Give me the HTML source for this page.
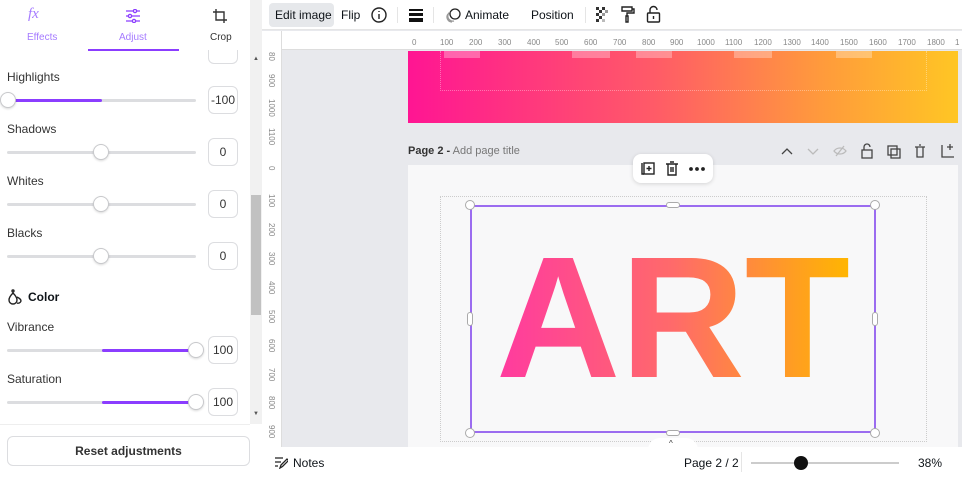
<!DOCTYPE html>
<html><head><meta charset="utf-8"><style>
*{box-sizing:border-box;margin:0;padding:0}
body{width:962px;height:477px;overflow:hidden;font-family:"Liberation Sans",sans-serif;background:#e8e9ed;position:relative;color:#0e1318}
.a{position:absolute}
.lbl{font-size:12px;color:#333;position:absolute;left:7px}
.track{position:absolute;left:7px;width:189px;height:3px;background:#dcdde0;border-radius:2px}
.fill{position:absolute;height:3px;background:#8b3dff;border-radius:2px}
.knob{position:absolute;width:16px;height:16px;border-radius:50%;background:#fff;border:1px solid #c8c9cc;box-shadow:0 1px 2px rgba(0,0,0,.15)}
.box{position:absolute;left:208px;width:30px;height:28px;border:1px solid #dcdde0;border-radius:6px;font-size:12px;text-align:center;line-height:26px;color:#333;background:#fff}
.tb{position:absolute;top:0;font-size:12px;line-height:30px;color:#0e1318}
.hr{position:absolute;top:38px;font-size:8px;color:#888}
.vr{position:absolute;left:264px;font-size:8px;color:#888;transform:rotate(90deg);transform-origin:left top;width:24px}
</style></head><body>
<div class="a" style="left:0;top:0;width:250px;height:477px;background:#fff"></div>
<div class="a" style="left:28px;top:6px;font-size:15px;font-style:italic;color:#a57bff;font-family:'Liberation Serif',serif">fx</div>
<div class="a" style="left:27px;top:32px;font-size:10px;color:#a57bff">Effects</div>
<svg class="a" style="left:125px;top:9px" width="16" height="14" viewBox="0 0 16 14" fill="none" stroke="#8b3dff" stroke-width="1.3"><path d="M1 2h14M1 7h14M1 12h14"/><circle cx="10" cy="2" r="1.6" fill="#fff"/><circle cx="5" cy="7" r="1.6" fill="#fff"/><circle cx="9" cy="12" r="1.6" fill="#fff"/></svg>
<div class="a" style="left:119px;top:32px;font-size:10px;color:#a57bff">Adjust</div>
<svg class="a" style="left:212px;top:8px" width="16" height="16" viewBox="0 0 16 16" fill="none" stroke="#333" stroke-width="1.4"><path d="M4 1v11h11M1 4h11v11"/></svg>
<div class="a" style="left:210px;top:32px;font-size:10px;color:#333">Crop</div>
<div class="a" style="left:88px;top:49px;width:91px;height:2px;background:#8b3dff"></div>
<div class="box" style="top:50px;height:14px;border-top:none;border-radius:0 0 6px 6px"></div>

<div class="lbl" style="top:70px">Highlights</div>
<div class="track" style="top:99px"></div><div class="fill" style="left:7px;top:99px;width:95px"></div>
<div class="knob" style="left:0;top:92px"></div><div class="box" style="top:86px">-100</div>

<div class="lbl" style="top:122px">Shadows</div>
<div class="track" style="top:151px"></div><div class="knob" style="left:93px;top:144px"></div><div class="box" style="top:138px">0</div>
<div class="lbl" style="top:174px">Whites</div>
<div class="track" style="top:203px"></div><div class="knob" style="left:93px;top:196px"></div><div class="box" style="top:190px">0</div>
<div class="lbl" style="top:226px">Blacks</div>
<div class="track" style="top:255px"></div><div class="knob" style="left:93px;top:248px"></div><div class="box" style="top:242px">0</div>

<svg class="a" style="left:8px;top:289px" width="14" height="16" viewBox="0 0 14 16" fill="none" stroke="#222" stroke-width="1.4"><path d="M5 4c-3 3-4 5-4 7a4 4 0 0 0 8 0c0-2-1-4-4-7zM9 8c2 1 4 2 4 4a3 3 0 0 1-4 2"/><circle cx="5" cy="2" r="1"/></svg>
<div class="a" style="left:28px;top:290px;font-size:12px;font-weight:bold">Color</div>

<div class="lbl" style="top:320px">Vibrance</div>
<div class="track" style="top:349px"></div><div class="fill" style="left:102px;top:349px;width:88px"></div>
<div class="knob" style="left:188px;top:342px"></div><div class="box" style="top:336px">100</div>
<div class="lbl" style="top:372px">Saturation</div>
<div class="track" style="top:401px"></div><div class="fill" style="left:102px;top:401px;width:88px"></div>
<div class="knob" style="left:188px;top:394px"></div><div class="box" style="top:388px">100</div>

<div class="a" style="left:0;top:424px;width:250px;height:1px;background:#eee"></div>
<div class="a" style="left:7px;top:436px;width:243px;height:30px;border:1px solid #dcdde0;border-radius:6px;font-size:12px;font-weight:bold;text-align:center;line-height:28px;color:#333">Reset adjustments</div>

<div class="a" style="left:250px;top:0;width:12px;height:424px;background:#f1f1f1"></div>
<div class="a" style="left:251px;top:195px;width:10px;height:120px;background:#c1c1c1"></div>
<div class="a" style="left:253px;top:56px;font-size:6px;color:#555">▲</div>
<div class="a" style="left:253px;top:411px;font-size:6px;color:#555">▼</div>
<div class="a" style="left:250px;top:424px;width:12px;height:53px;background:#fff"></div>

<div class="a" style="left:262px;top:0;width:700px;height:30px;background:#fff;border-bottom:1px solid #e5e5e5"></div>
<div class="a" style="left:269px;top:3px;width:65px;height:24px;background:#e6e8eb;border-radius:4px"></div>
<div class="tb" style="left:275px">Edit image</div>
<div class="tb" style="left:341px">Flip</div>
<svg class="a" style="left:371px;top:7px" width="16" height="16" viewBox="0 0 16 16" fill="none" stroke="#222" stroke-width="1.4"><circle cx="8" cy="8" r="7"/><path d="M8 7v5M8 4v1"/></svg>
<div class="a" style="left:397px;top:7px;width:1px;height:16px;background:#e5e5e5"></div>
<div class="a" style="left:409px;top:9px;width:14px;height:2px;background:#111"></div>
<div class="a" style="left:409px;top:13px;width:14px;height:3px;background:#111"></div>
<div class="a" style="left:409px;top:18px;width:14px;height:4px;background:#111"></div>
<div class="a" style="left:433px;top:7px;width:1px;height:16px;background:#e5e5e5"></div>
<svg class="a" style="left:445px;top:7px" width="16" height="16" viewBox="0 0 16 16" fill="none" stroke="#222" stroke-width="1.3"><circle cx="10" cy="7" r="5"/><path d="M5 5a5 5 0 0 0 4 9M3 7a5 5 0 0 0 4 8" stroke="#999"/></svg>
<div class="tb" style="left:465px">Animate</div>
<div class="tb" style="left:531px">Position</div>
<div class="a" style="left:585px;top:7px;width:1px;height:16px;background:#e5e5e5"></div>
<svg class="a" style="left:596px;top:7px" width="15" height="15"><g fill="#333"><rect x="0" y="0" width="3" height="3"/><rect x="6" y="0" width="3" height="3"/><rect x="3" y="3" width="3" height="3"/><rect x="9" y="3" width="3" height="3" fill="#999"/><rect x="0" y="6" width="3" height="3"/><rect x="6" y="6" width="3" height="3" fill="#999"/><rect x="3" y="9" width="3" height="3"/><rect x="0" y="12" width="3" height="3"/><rect x="6" y="12" width="3" height="3" fill="#bbb"/></g></svg>
<svg class="a" style="left:621px;top:6px" width="14" height="17" viewBox="0 0 14 17" fill="none" stroke="#222" stroke-width="1.4"><path d="M1 1h10v4H1zM11 3h2v4H6v3M5 10h2v6H5z"/></svg>
<svg class="a" style="left:646px;top:5px" width="15" height="18" viewBox="0 0 15 18" fill="none" stroke="#222" stroke-width="1.4"><path d="M4 8V5a3.5 3.5 0 0 1 7 0"/><rect x="1.5" y="8" width="12" height="9" rx="1"/><path d="M7.5 11v3"/></svg>

<div class="a" style="left:262px;top:31px;width:700px;height:19px;background:#fff;border-bottom:1px solid #ddd"></div>
<div class="a" style="left:262px;top:31px;width:20px;height:416px;background:#fff;border-right:1px solid #ddd"></div>
<div class="hr" style="left:412px">0</div><div class="hr" style="left:440px">100</div><div class="hr" style="left:469px">200</div><div class="hr" style="left:498px">300</div><div class="hr" style="left:527px">400</div><div class="hr" style="left:555px">500</div><div class="hr" style="left:584px">600</div><div class="hr" style="left:613px">700</div><div class="hr" style="left:642px">800</div><div class="hr" style="left:670px">900</div><div class="hr" style="left:697px">1000</div><div class="hr" style="left:725px">1100</div><div class="hr" style="left:754px">1200</div><div class="hr" style="left:783px">1300</div><div class="hr" style="left:811px">1400</div><div class="hr" style="left:840px">1500</div><div class="hr" style="left:869px">1600</div><div class="hr" style="left:898px">1700</div><div class="hr" style="left:927px">1800</div><div class="hr" style="left:955px">1</div>
<div class="vr" style="top:52px;left:276px">80</div><div class="vr" style="top:74px;left:276px">900</div><div class="vr" style="top:99px;left:276px">1000</div><div class="vr" style="top:128px;left:276px">1100</div><div class="vr" style="top:166px;left:276px">0</div><div class="vr" style="top:194px;left:276px">100</div><div class="vr" style="top:223px;left:276px">200</div><div class="vr" style="top:252px;left:276px">300</div><div class="vr" style="top:281px;left:276px">400</div><div class="vr" style="top:310px;left:276px">500</div><div class="vr" style="top:339px;left:276px">600</div><div class="vr" style="top:368px;left:276px">700</div><div class="vr" style="top:396px;left:276px">800</div><div class="vr" style="top:425px;left:276px">900</div>

<div class="a" style="left:408px;top:51px;width:550px;height:72px;background:linear-gradient(90deg,#ff1593,#ff5b67 45%,#ff9a3c 75%,#ffc624)"></div>
<div class="a" style="left:440px;top:51px;width:487px;height:40px;border:1px dotted rgba(255,255,255,.35);border-top:none"></div>
<div class="a" style="left:444px;top:51px;width:36px;height:7px;background:rgba(255,255,255,.3)"></div>
<div class="a" style="left:572px;top:51px;width:38px;height:7px;background:rgba(255,255,255,.3)"></div>
<div class="a" style="left:636px;top:51px;width:36px;height:7px;background:rgba(255,255,255,.3)"></div>
<div class="a" style="left:734px;top:51px;width:38px;height:7px;background:rgba(255,255,255,.3)"></div>
<div class="a" style="left:836px;top:51px;width:36px;height:7px;background:rgba(255,255,255,.3)"></div>

<div class="a" style="left:408px;top:145px;font-size:11px;color:#333"><b style="font-weight:600">Page 2 -</b> <span style="color:#777">Add page title</span></div>
<svg class="a" style="left:778px;top:143px" width="180" height="16" viewBox="0 0 180 16" fill="none" stroke="#444" stroke-width="1.3"><path d="M4 11l5-5 5 5"/><path d="M30 6l5 5 5-5" stroke="#bbb"/><path d="M56 8c3-4 9-4 12 0-3 4-9 4-12 0zM58 13l8-10" stroke="#bbb"/><path d="M86 7V4a3 3 0 0 1 6 0"/><rect x="84" y="7" width="10" height="8"/><rect x="110" y="3" width="9" height="9"/><rect x="113" y="6" width="9" height="9"/><path d="M137 4h10M139 4v10h6V4M141 2h2"/><path d="M164 2v12h12M172 1v6M169 4h6"/></svg>

<div class="a" style="left:408px;top:165px;width:550px;height:282px;background:#f8f8f9"></div>
<div class="a" style="left:440px;top:196px;width:487px;height:246px;border:1px dotted #ccc"></div>
<svg class="a" style="left:408px;top:165px" width="550" height="282">
<defs><linearGradient id="g" x1="0" x2="1"><stop offset="0" stop-color="#ff3aa0"/><stop offset=".5" stop-color="#ff6a6a"/><stop offset="1" stop-color="#ffb600"/></linearGradient></defs>
<text x="88" y="212" font-family="Liberation Sans" font-weight="bold" font-size="173" textLength="354" lengthAdjust="spacingAndGlyphs" fill="url(#g)">ART</text>
</svg>
<div class="a" style="left:470px;top:205px;width:406px;height:228px;border:2px solid #9b6cf0"></div>
<div class="a" style="left:465px;top:200px;width:10px;height:10px;border-radius:50%;background:#fff;border:1px solid #aaa"></div>
<div class="a" style="left:870px;top:200px;width:10px;height:10px;border-radius:50%;background:#fff;border:1px solid #aaa"></div>
<div class="a" style="left:465px;top:428px;width:10px;height:10px;border-radius:50%;background:#fff;border:1px solid #aaa"></div>
<div class="a" style="left:870px;top:428px;width:10px;height:10px;border-radius:50%;background:#fff;border:1px solid #aaa"></div>
<div class="a" style="left:666px;top:202px;width:14px;height:6px;border-radius:3px;background:#fff;border:1px solid #aaa"></div>
<div class="a" style="left:666px;top:430px;width:14px;height:6px;border-radius:3px;background:#fff;border:1px solid #aaa"></div>
<div class="a" style="left:467px;top:312px;width:6px;height:14px;border-radius:3px;background:#fff;border:1px solid #aaa"></div>
<div class="a" style="left:872px;top:312px;width:6px;height:14px;border-radius:3px;background:#fff;border:1px solid #aaa"></div>

<div class="a" style="left:633px;top:154px;width:80px;height:29px;background:#fff;border-radius:8px;box-shadow:0 1px 4px rgba(0,0,0,.15)"></div>
<svg class="a" style="left:640px;top:160px" width="68" height="17" viewBox="0 0 68 17" fill="none" stroke="#222" stroke-width="1.4"><path d="M2 3v11h2"/><rect x="4" y="3" width="10" height="11"/><path d="M9 6v5M6.5 8.5h5"/><path d="M26 4h12M28 4v11h8V4M30 2h4M31 7v5M33 7v5"/><circle cx="51" cy="9" r="1.2" fill="#222"/><circle cx="57" cy="9" r="1.2" fill="#222"/><circle cx="63" cy="9" r="1.2" fill="#222"/></svg>

<div class="a" style="left:262px;top:447px;width:700px;height:30px;background:#fff"></div>
<div class="a" style="left:648px;top:438px;width:50px;height:12px;background:#fff;border-radius:12px 12px 0 0"></div>
<div class="a" style="left:669px;top:439px;font-size:8px;color:#333">^</div>
<svg class="a" style="left:274px;top:456px" width="14" height="13" viewBox="0 0 14 13" fill="none" stroke="#222" stroke-width="1.3"><path d="M1 2h8M1 6h6M1 10h3M6 12l1-3 6-6 1.5 1.5-6 6z"/></svg>
<div class="a" style="left:293px;top:456px;font-size:12px">Notes</div>
<div class="a" style="left:684px;top:456px;font-size:12px">Page 2 / 2</div>
<div class="a" style="left:741px;top:452px;width:1px;height:20px;background:#e5e5e5"></div>
<div class="a" style="left:751px;top:462px;width:148px;height:2px;background:#ccc"></div>
<div class="a" style="left:794px;top:456px;width:14px;height:14px;border-radius:50%;background:#111"></div>
<div class="a" style="left:918px;top:456px;font-size:12px">38%</div>
</body></html>
